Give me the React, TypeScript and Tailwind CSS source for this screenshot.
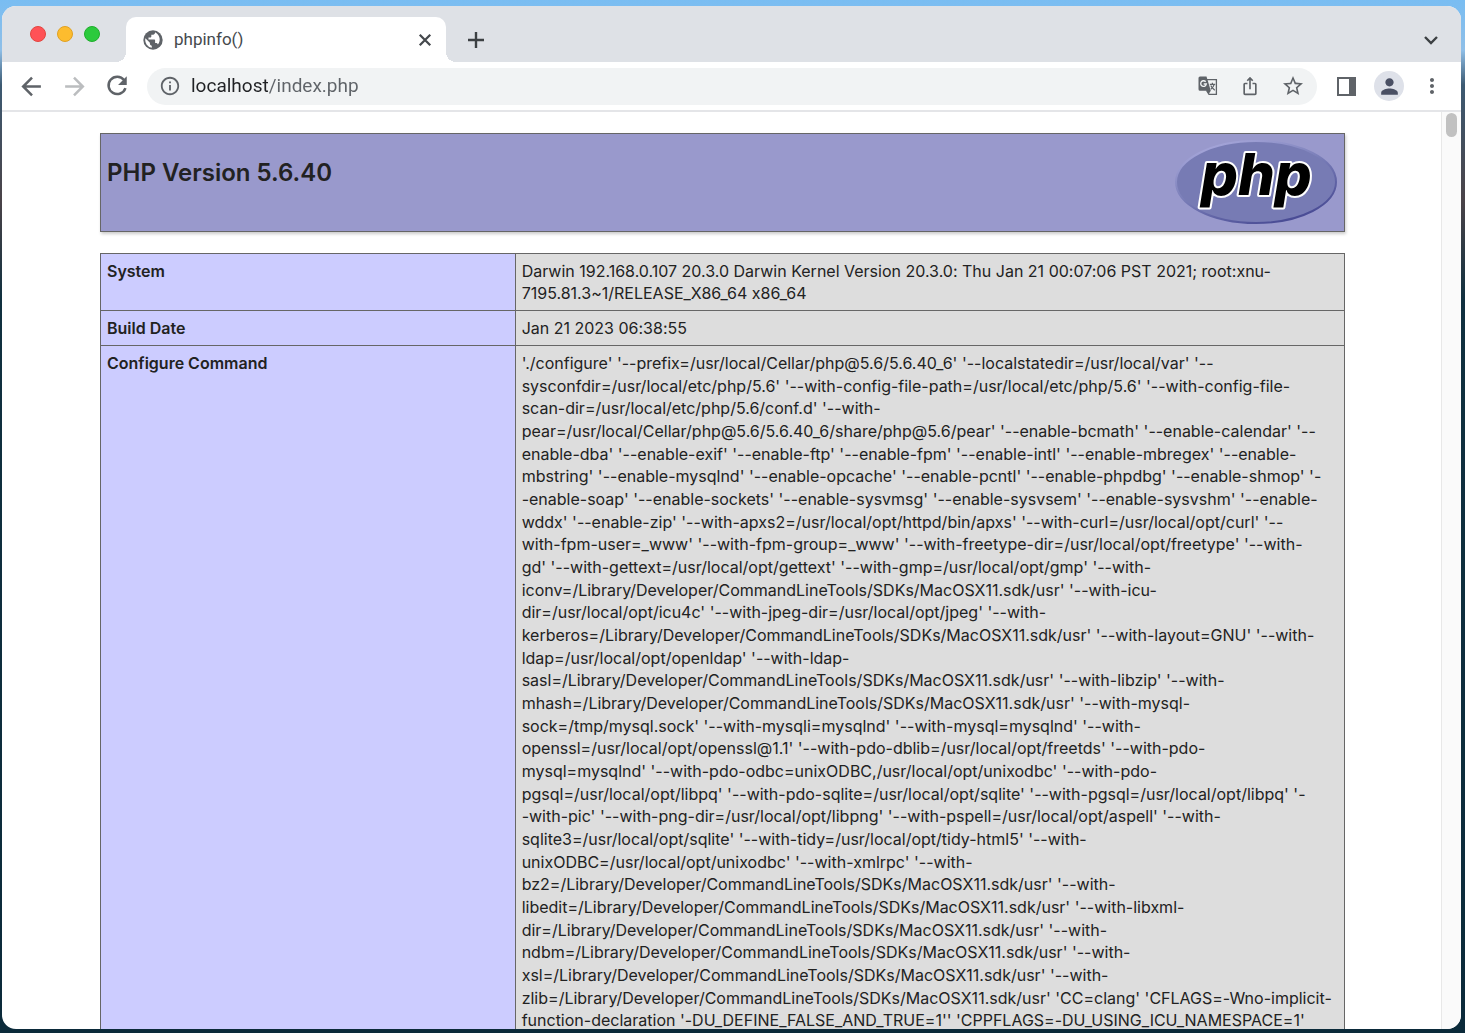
import type { ReactNode } from "react";
import { MdInfoOutline, MdIosShare, MdMoreVert, MdPerson, MdStarBorder } from "react-icons/md";

const systemLines = [
  "Darwin 192.168.0.107 20.3.0 Darwin Kernel Version 20.3.0: Thu Jan 21 00:07:06 PST 2021; root:xnu-",
  "7195.81.3~1/RELEASE_X86_64 x86_64",
];

const configureLines = [
  "'./configure' '--prefix=/usr/local/Cellar/php@5.6/5.6.40_6' '--localstatedir=/usr/local/var' '--",
  "sysconfdir=/usr/local/etc/php/5.6' '--with-config-file-path=/usr/local/etc/php/5.6' '--with-config-file-",
  "scan-dir=/usr/local/etc/php/5.6/conf.d' '--with-",
  "pear=/usr/local/Cellar/php@5.6/5.6.40_6/share/php@5.6/pear' '--enable-bcmath' '--enable-calendar' '--",
  "enable-dba' '--enable-exif' '--enable-ftp' '--enable-fpm' '--enable-intl' '--enable-mbregex' '--enable-",
  "mbstring' '--enable-mysqlnd' '--enable-opcache' '--enable-pcntl' '--enable-phpdbg' '--enable-shmop' '-",
  "-enable-soap' '--enable-sockets' '--enable-sysvmsg' '--enable-sysvsem' '--enable-sysvshm' '--enable-",
  "wddx' '--enable-zip' '--with-apxs2=/usr/local/opt/httpd/bin/apxs' '--with-curl=/usr/local/opt/curl' '--",
  "with-fpm-user=_www' '--with-fpm-group=_www' '--with-freetype-dir=/usr/local/opt/freetype' '--with-",
  "gd' '--with-gettext=/usr/local/opt/gettext' '--with-gmp=/usr/local/opt/gmp' '--with-",
  "iconv=/Library/Developer/CommandLineTools/SDKs/MacOSX11.sdk/usr' '--with-icu-",
  "dir=/usr/local/opt/icu4c' '--with-jpeg-dir=/usr/local/opt/jpeg' '--with-",
  "kerberos=/Library/Developer/CommandLineTools/SDKs/MacOSX11.sdk/usr' '--with-layout=GNU' '--with-",
  "ldap=/usr/local/opt/openldap' '--with-ldap-",
  "sasl=/Library/Developer/CommandLineTools/SDKs/MacOSX11.sdk/usr' '--with-libzip' '--with-",
  "mhash=/Library/Developer/CommandLineTools/SDKs/MacOSX11.sdk/usr' '--with-mysql-",
  "sock=/tmp/mysql.sock' '--with-mysqli=mysqlnd' '--with-mysql=mysqlnd' '--with-",
  "openssl=/usr/local/opt/openssl@1.1' '--with-pdo-dblib=/usr/local/opt/freetds' '--with-pdo-",
  "mysql=mysqlnd' '--with-pdo-odbc=unixODBC,/usr/local/opt/unixodbc' '--with-pdo-",
  "pgsql=/usr/local/opt/libpq' '--with-pdo-sqlite=/usr/local/opt/sqlite' '--with-pgsql=/usr/local/opt/libpq' '-",
  "-with-pic' '--with-png-dir=/usr/local/opt/libpng' '--with-pspell=/usr/local/opt/aspell' '--with-",
  "sqlite3=/usr/local/opt/sqlite' '--with-tidy=/usr/local/opt/tidy-html5' '--with-",
  "unixODBC=/usr/local/opt/unixodbc' '--with-xmlrpc' '--with-",
  "bz2=/Library/Developer/CommandLineTools/SDKs/MacOSX11.sdk/usr' '--with-",
  "libedit=/Library/Developer/CommandLineTools/SDKs/MacOSX11.sdk/usr' '--with-libxml-",
  "dir=/Library/Developer/CommandLineTools/SDKs/MacOSX11.sdk/usr' '--with-",
  "ndbm=/Library/Developer/CommandLineTools/SDKs/MacOSX11.sdk/usr' '--with-",
  "xsl=/Library/Developer/CommandLineTools/SDKs/MacOSX11.sdk/usr' '--with-",
  "zlib=/Library/Developer/CommandLineTools/SDKs/MacOSX11.sdk/usr' 'CC=clang' 'CFLAGS=-Wno-implicit-",
  "function-declaration '-DU_DEFINE_FALSE_AND_TRUE=1'' 'CPPFLAGS=-DU_USING_ICU_NAMESPACE=1'",
];

// Stroked 24px icon for the browser chrome
function Glyph({ d, weight = 2.4, className }: { d: string; weight?: number; className: string }) {
  return (
    <svg viewBox="0 0 24 24" className={className} fill="none" stroke="currentColor" strokeWidth={weight} aria-hidden="true">
      <path d={d} />
    </svg>
  );
}

function GlobeIcon() {
  return (
    <svg width="20" height="20" viewBox="0 0 20 20" className="shrink-0 text-[#5f6368]" aria-hidden="true">
      <circle cx="10" cy="10" r="9.7" fill="currentColor" />
      <path
        fill="#fff"
        d="M12 2.3v.5c0 1-.8 1.900-1.900 1.900H8.300v1.800c0 .6-.4 1-1 1H5.500v1.900h5.600c.6 0 1 .4 1 1v2.700h1c.8 0 1.500.6 1.800 1.300A7.800 7.800 0 0 0 12 2.300zM2.400 8.300l4.500 4.500v1c0 1 .8 1.900 1.900 1.900v2A7.800 7.800 0 0 1 2.400 8.300z"
      />
    </svg>
  );
}

function TranslateIcon() {
  return (
    <svg width="20" height="20" viewBox="0 0 20 20" aria-hidden="true">
      <path fill="none" stroke="currentColor" strokeWidth="1.3" d="M9 3.7h9.4v14.6H11l-2.5-4" />
      <path fill="currentColor" d="M2 .5h6.500l4.300 14.300H2A1.500 1.500 0 0 1 .5 13.300V2A1.500 1.500 0 0 1 2 .5zM8.800 14.800h4L10.700 18z" />
      <path fill="none" stroke="#f1f3f4" strokeWidth="1.4" d="M7.700 5.800A2.800 2.800 0 1 0 8.300 8H5.700" />
      <path fill="none" stroke="currentColor" strokeWidth="1.2" d="M11.800 8.300h5.400M14.400 6.800v1.500M16.200 8.300c-.5 2-1.900 3.800-3.400 4.900M12.800 9.500c.7 2 2.200 3.400 4 4.800" />
    </svg>
  );
}

function PhpLogo() {
  return (
    <svg width="164" height="88" viewBox="0 0 164 88" role="img" aria-label="PHP logo">
      <defs>
        <linearGradient id="rim" x1="0.2" y1="0" x2="0.8" y2="1">
          <stop offset="0" stopColor="#a9a9dc" />
          <stop offset="0.45" stopColor="#7a7eb8" />
          <stop offset="1" stopColor="#434590" />
        </linearGradient>
      </defs>
      <ellipse cx="82" cy="44" rx="80" ry="41" fill="#777bb4" stroke="url(#rim)" strokeWidth="2" />
      <text
        x="27"
        y="57"
        className="font-[Inter,sans-serif] text-[58px] font-extrabold italic"
        fill="#000"
        stroke="#fff"
        strokeWidth="4"
        strokeLinejoin="round"
        paintOrder="stroke"
      >
        php
      </text>
    </svg>
  );
}

function TabStrip() {
  return (
    <header className="flex h-14 shrink-0 items-end bg-[#dee1e6] pr-[18px]">
      <div className="flex h-14 items-center gap-[11px] pl-7">
        <button aria-label="Close window" className="size-4 rounded-full border border-[#e2463f] bg-[#ff5257]" />
        <button aria-label="Minimize window" className="size-4 rounded-full border border-[#e0a123] bg-[#fdbc2e]" />
        <button aria-label="Zoom window" className="size-4 rounded-full border border-[#1fae2c] bg-[#2bca3d]" />
      </div>

      {/* Active tab, with the flared bottom corners */}
      <div className="ml-4 flex h-[45px] items-end">
        <span className="size-2.5 bg-[radial-gradient(circle_at_0_0,#dee1e6_10px,#fff_10px)]" />
        <div className="flex h-full w-[320px] items-center rounded-t-[10px] bg-white pr-3 pl-[17px]">
          <GlobeIcon />
          <span className="ml-[11px] flex-1 font-[Roboto,sans-serif] text-[17px] text-[#45494d]">phpinfo()</span>
          <button aria-label="Close tab" className="text-[#45494d]">
            <Glyph d="M5 5l14 14M19 5L5 19" weight={3} className="size-[18px]" />
          </button>
        </div>
        <span className="size-2.5 bg-[radial-gradient(circle_at_100%_0,#dee1e6_10px,#fff_10px)]" />
      </div>

      <button aria-label="New tab" className="mb-2.5 ml-2 text-[#3c4043]">
        <Glyph d="M12 4v16M4 12h16" className="size-6" />
      </button>
      <button aria-label="Search tabs" className="mb-2.5 ml-auto text-[#3c4043]">
        <Glyph d="M6 9l6 6 6-6" className="size-6" />
      </button>
    </header>
  );
}

function Toolbar() {
  return (
    <nav className="flex h-[50px] shrink-0 items-center border-b-2 border-[#e4e5e8] bg-white px-[17px] text-[#5f6368]">
      <button aria-label="Back">
        <Glyph d="M21 12H5M12.500 3.500L4 12l8.500 8.500" className="size-[25px]" />
      </button>
      <button aria-label="Forward" className="ml-[18px] text-[#bbbdbf]">
        <Glyph d="M3 12h16M11.500 3.500L20 12l-8.500 8.500" className="size-[25px]" />
      </button>
      <button aria-label="Reload" className="ml-[17px]">
        <svg viewBox="0 0 24 24" className="size-[26px]" aria-hidden="true">
          <path fill="none" stroke="currentColor" strokeWidth="2.3" d="M18.500 6.500A8 8 0 1 0 19.800 14" />
          <path fill="currentColor" d="M21 3v8h-8z" />
        </svg>
      </button>
      <div className="ml-[17px] flex h-[37px] flex-1 items-center rounded-full bg-[#f1f3f4] px-3">
        <button aria-label="View site information"><MdInfoOutline className="size-[22px]" /></button>
        <input
          type="text"
          aria-label="Address"
          defaultValue="localhost/index.php"
          className="ml-2.5 min-w-0 flex-1 bg-[linear-gradient(90deg,#202124_77px,#5f6368_77px)] bg-clip-text font-[Roboto,sans-serif] text-[19px] text-transparent outline-none"
        />
        <button aria-label="Translate this page"><TranslateIcon /></button>
        <button aria-label="Share this page" className="ml-[22px]"><MdIosShare className="size-5" /></button>
        <button aria-label="Bookmark this page" className="ml-[21px]"><MdStarBorder className="size-6" /></button>
      </div>
      <button aria-label="Side panel" className="ml-5">
        <svg width="19" height="19" viewBox="0 0 19 19">
          <path fill="currentColor" fillRule="evenodd" d="M0 0h19v19H0zM2 2v15h10V2z" />
        </svg>
      </button>
      <button aria-label="Profile" className="ml-[18px] grid size-[30px] place-items-center rounded-full bg-[#dee1e9] text-[#4a5064]">
        <MdPerson className="size-[25px]" />
      </button>
      <button aria-label="Menu" className="ml-4"><MdMoreVert className="size-6" /></button>
    </nav>
  );
}

function InfoRow({ label, children }: { label: string; children: ReactNode }) {
  return (
    <tr>
      <th scope="row" className="w-1/3 border border-[#666] bg-[#ccccff] p-1.5 font-semibold">
        {label}
      </th>
      <td className="border border-[#666] bg-[#dddddd] p-1.5 whitespace-nowrap">{children}</td>
    </tr>
  );
}

export default function App() {
  return (
    <div className="flex h-screen bg-[linear-gradient(180deg,#79bdf2_0px,#8fbfe8_50px,#3d5a72_85px,#4a4348_200px,#10303f_300px,#0b2a3a_100%)] pt-1.5 pr-1 pb-1 pl-0.5">
      <div className="flex min-w-0 flex-1 flex-col overflow-hidden rounded-[14px] bg-white">
        <TabStrip />
        <Toolbar />
        <div className="flex min-h-0 flex-1 font-[Inter,sans-serif] text-base leading-[22px] text-[#222] [font-variant-ligatures:no-contextual]">
          <main className="min-w-0 flex-1 overflow-hidden pt-[21px] pr-6 pl-[26px]">
            <div className="mx-auto flex h-[99px] max-w-[1245px] justify-between border border-[#666] bg-[#9999cc] px-1.5 pt-1 shadow-[1px_2px_3px_#ccc]">
              <h1 className="pt-[19px] text-2xl font-semibold">PHP Version 5.6.40</h1>
              <PhpLogo />
            </div>

            <table className="mx-auto mt-[21px] w-full max-w-[1245px] table-fixed border-collapse text-left">
              <tbody className="align-top">
                <InfoRow label="System">
                  {systemLines.map((line) => (
                    <div key={line}>{line}</div>
                  ))}
                </InfoRow>
                <InfoRow label="Build Date">Jan 21 2023 06:38:55</InfoRow>
                <InfoRow label="Configure Command">
                  <div className="grid h-[680px] auto-rows-fr">
                    {configureLines.map((line) => (
                      <div key={line}>{line}</div>
                    ))}
                  </div>
                </InfoRow>
              </tbody>
            </table>
          </main>

          {/* Scrollbar track */}
          <div className="w-5 shrink-0 border-l border-[#e8e8e8] bg-[#fafafa] pt-px">
            <div className="mx-auto h-6 w-[11px] rounded-full bg-[#c1c1c1]" />
          </div>
        </div>
      </div>
    </div>
  );
}
